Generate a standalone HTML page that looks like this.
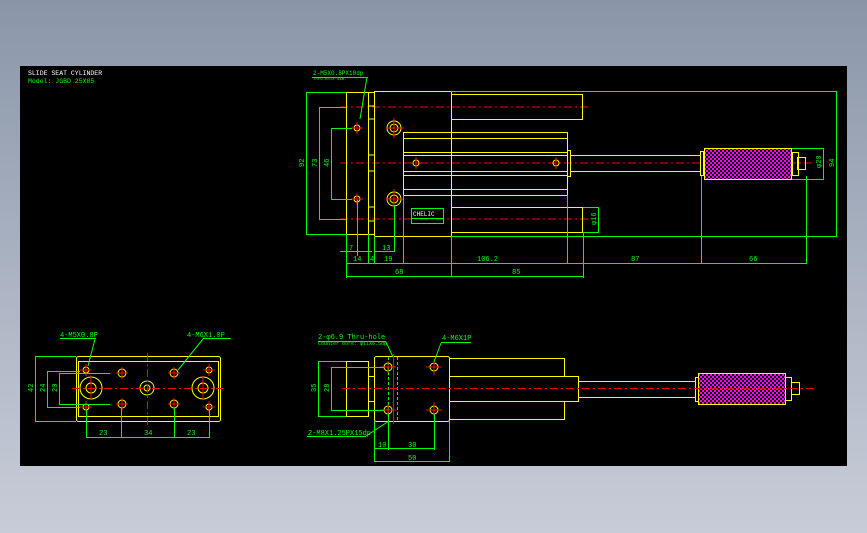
<!DOCTYPE html>
<html><head><meta charset="utf-8"><style>
html,body{margin:0;padding:0;width:867px;height:533px;overflow:hidden;background:linear-gradient(#8a96a8,#b0b8c6 60%,#c8ccd8);}
svg{position:absolute;left:0;top:0}
text{font-family:"Liberation Mono",monospace;font-size:7px;fill:#00ff00}
</style></head><body>
<svg width="867" height="533" viewBox="0 0 867 533">
<defs>
<pattern id="k" width="4" height="4" patternUnits="userSpaceOnUse">
<rect width="4" height="4" fill="#000"/><rect width="2" height="2" fill="#ff00ff"/><rect x="2" y="2" width="2" height="2" fill="#ff00ff"/>
</pattern>
</defs>
<rect x="20" y="66" width="827" height="400" fill="#000"/>
<text x="28" y="75" style="fill:#fff;font-size:6.5px">SLIDE SEAT CYLINDER</text>
<text x="28" y="83" style="font-size:6.5px">Model: JGBD 25X85</text>

<!-- ============ TOP VIEW ============ -->
<g fill="none" stroke="#ff0000" stroke-width="1" stroke-dasharray="8,3,2,3">
<line x1="340" y1="107" x2="590" y2="107"/>
<line x1="340" y1="163" x2="815" y2="163"/>
<line x1="340" y1="219" x2="590" y2="219"/>
</g>
<g fill="none" stroke="#ffff00" stroke-width="1">
<rect x="346.5" y="92.5" width="22" height="142"/>
<rect x="368.5" y="92.5" width="6" height="142"/>
<line x1="368" y1="106" x2="374" y2="106"/><line x1="368" y1="119" x2="374" y2="119"/>
<line x1="368" y1="155" x2="374" y2="155"/><line x1="368" y1="171" x2="374" y2="171"/>
<line x1="368" y1="207" x2="374" y2="207"/><line x1="368" y1="221" x2="374" y2="221"/>
<rect x="374.5" y="91.5" width="77" height="145"/>
<rect x="451.5" y="94.5" width="131" height="25"/>
<rect x="451.5" y="207.5" width="131" height="25"/>
<rect x="403.5" y="132.5" width="164" height="63"/>
<line x1="403" y1="138.5" x2="567" y2="138.5"/>
<line x1="403" y1="152.5" x2="567" y2="152.5"/>
<line x1="403" y1="155.5" x2="567" y2="155.5"/>
<line x1="403" y1="171.5" x2="567" y2="171.5"/>
<line x1="403" y1="175.5" x2="567" y2="175.5"/>
<line x1="403" y1="189.5" x2="567" y2="189.5"/>
<rect x="567.5" y="150.5" width="3" height="26"/>
<rect x="570.5" y="155.5" width="130" height="16"/>
<rect x="700.5" y="151.5" width="3" height="24"/>
<rect x="704.5" y="148.5" width="87" height="31" fill="url(#k)"/>
<rect x="792.5" y="152.5" width="6" height="23"/>
<rect x="797.5" y="157.5" width="8" height="12"/>
<circle cx="394" cy="128" r="7"/><circle cx="394" cy="128" r="4"/>
<circle cx="394" cy="199" r="7"/><circle cx="394" cy="199" r="4"/>
<circle cx="416" cy="163" r="3"/><circle cx="556" cy="163" r="3"/>
<circle cx="357" cy="128" r="3"/><circle cx="357" cy="199" r="3"/>
</g>
<g stroke="#ff0000" stroke-width="1">
<line x1="386" y1="128" x2="404" y2="128"/><line x1="394" y1="118" x2="394" y2="138"/>
<line x1="386" y1="199" x2="404" y2="199"/><line x1="394" y1="189" x2="394" y2="209"/>
<line x1="351" y1="128" x2="363" y2="128"/><line x1="357" y1="122" x2="357" y2="134"/>
<line x1="351" y1="199" x2="363" y2="199"/><line x1="357" y1="193" x2="357" y2="205"/>
<line x1="416" y1="157" x2="416" y2="169"/><line x1="556" y1="157" x2="556" y2="169"/>
</g>
<g fill="none" stroke="#00ff00" stroke-width="1">
<!-- left dims -->
<path d="M306.5 92.5V234.5M306 92.5H346M306 234.5H346"/>
<path d="M319.5 107.5V219.5M319 107.5H346M319 219.5H346"/>
<path d="M331.5 128.5V199.5M331 128.5H352M331 199.5H352"/>
<!-- right dims -->
<path d="M451 91.5H837M451 236.5H837M836.5 91V237"/>
<path d="M792 148.5H823.5V179.5H792"/>
<path d="M583 207.5H598.5V232.5H583"/>
<!-- bottom extension -->
<path d="M346.5 234V278M357.5 200V256M368.5 234V264M374.5 236V264M394.5 205V252M403.5 195V264M451.5 236V276M567.5 195V264M583.5 233V278M701.5 176V264M806.5 176V264"/>
<path d="M340 251.5H372M374 251.5H395"/>
<path d="M346 263.5H807"/>
<path d="M346 276.5H584"/>
<!-- leader -->
<path d="M312 77.5H368M367 77L360 119"/>
<rect x="411.5" y="208.5" width="32" height="10"/>
<rect x="411.5" y="218.5" width="32" height="5"/>
</g>
<text x="313" y="75" style="font-size:6px">2-M5X0.8PX10dp</text>
<text x="313" y="80" style="font-size:4px">Thru-hole dia.</text>
<text x="413" y="216" style="fill:#fff;font-size:6px">CHELIC</text>
<g style="font-size:7px">
<text transform="translate(304,167) rotate(-90)">92</text>
<text transform="translate(317,167) rotate(-90)">73</text>
<text transform="translate(329,167) rotate(-90)">46</text>
<text transform="translate(834,167) rotate(-90)">94</text>
<text transform="translate(821,168) rotate(-90)">φ20</text>
<text transform="translate(596,225) rotate(-90)">φ16</text>
<text x="349" y="250">7</text>
<text x="382" y="250">13</text>
<text x="353" y="261">14</text>
<text x="370" y="261">4</text>
<text x="384" y="261">19</text>
<text x="477" y="261">106.2</text>
<text x="631" y="261">87</text>
<text x="749" y="261">66</text>
<text x="395" y="274">68</text>
<text x="512" y="274">85</text>
</g>

<!-- ============ FRONT-LEFT VIEW ============ -->
<g fill="none" stroke="#ffff00" stroke-width="1">
<rect x="76.5" y="356.5" width="144" height="65" rx="2"/>
<rect x="78.5" y="361.5" width="140" height="55"/>
<circle cx="91" cy="388" r="11"/><circle cx="91" cy="388" r="5"/>
<circle cx="203" cy="388" r="11"/><circle cx="203" cy="388" r="5"/>
<circle cx="147" cy="388" r="7"/><circle cx="147" cy="388" r="3"/>
<circle cx="122" cy="373" r="4"/><circle cx="122" cy="404" r="4"/>
<circle cx="174" cy="373" r="4"/><circle cx="174" cy="404" r="4"/>
<circle cx="86" cy="370" r="3"/><circle cx="86" cy="407" r="3"/>
<circle cx="209" cy="370" r="3"/><circle cx="209" cy="407" r="3"/>
</g>
<g stroke="#ff0000" stroke-width="1">
<line x1="72" y1="388.5" x2="225" y2="388.5" stroke-dasharray="8,3,2,3"/>
<line x1="147.5" y1="353" x2="147.5" y2="425" stroke-dasharray="8,3,2,3"/>
<path d="M80 370H92M86 364V376M80 407H92M86 401V413M203 370H215M209 364V376M203 407H215M209 401V413M116 373H128M122 367V379M116 404H128M122 398V410M168 373H180M174 367V379M168 404H180M174 398V410M91 376V400M203 376V400"/>
</g>
<g fill="none" stroke="#00ff00" stroke-width="1">
<path d="M35.5 356V421M35 356.5H76M35 421.5H76"/>
<path d="M47.5 371V407M47 371.5H80M47 407.5H80"/>
<path d="M59.5 373V404M59 373.5H110M59 404.5H110"/>
<path d="M86.5 410V438M121.5 408V438M174.5 408V438M209.5 410V438M86 437.5H210"/>
<path d="M60 338.5H96M95 339L88 366M203 338.5H231M203 339L178 370"/>
</g>
<g style="font-size:7px">
<text x="60" y="337">4-M5X0.8P</text>
<text x="187" y="337">4-M6X1.0P</text>
<text transform="translate(33,392) rotate(-90)">42</text>
<text transform="translate(45,392) rotate(-90)">24</text>
<text transform="translate(57,392) rotate(-90)">20</text>
<text x="99" y="435">23</text>
<text x="144" y="435">34</text>
<text x="187" y="435">23</text>
</g>

<!-- ============ SIDE VIEW BOTTOM ============ -->
<g fill="none" stroke="#ffff00" stroke-width="1">
<rect x="346.5" y="361.5" width="22" height="55"/>
<path d="M368 376.5H374M368 401.5H374"/>
<rect x="374.5" y="356.5" width="75" height="65" rx="2"/>
<path d="M449.5 358.5H564.5V376M564.5 401V419.5H449.5"/>
<rect x="449.5" y="376.5" width="129" height="25"/>
<rect x="578.5" y="381.5" width="117" height="16"/>
<rect x="695.5" y="377.5" width="3" height="24"/>
<rect x="698.5" y="373.5" width="87" height="31" fill="url(#k)"/>
<rect x="785.5" y="377.5" width="6" height="23"/>
<rect x="791.5" y="382.5" width="8" height="12"/>
<circle cx="388" cy="367" r="4"/><circle cx="388" cy="410" r="4"/>
<circle cx="434" cy="367" r="4"/><circle cx="434" cy="410" r="4"/>
</g>
<g stroke="#00ff00" stroke-width="1" fill="none" stroke-dasharray="3,2">
<path d="M397.5 357V421M388.5 357V421"/>
</g>
<g stroke="#ff0000" stroke-width="1">
<line x1="342" y1="388.5" x2="815" y2="388.5" stroke-dasharray="8,3,2,3"/>
<path d="M393.5 354V424M380 367H396M388 361V373M380 410H396M388 404V416M426 367H442M434 359V375M426 410H442M434 402V418"/>
</g>
<g fill="none" stroke="#00ff00" stroke-width="1">
<path d="M318.5 361V416M318 361.5H346M318 416.5H346"/>
<path d="M331.5 367V410M331 367.5H384M331 410.5H384"/>
<path d="M374.5 421V462M388.5 414V450M434.5 414V450M449.5 421V462M374 448.5H435M374 461.5H450"/>
<path d="M318 341.5H386M386 342L393 357M441 342.5H471M441 343L434 362M307 436.5H366M366 436L389 421"/>
</g>
<g style="font-size:6px">
<text x="318" y="339">2-φ6.9 Thru-hole</text>
<text x="318" y="345" style="font-size:5px">Counter bore: φ11X6.5dp</text>
<text x="442" y="340">4-M6X1P</text>
<text x="308" y="435">2-M8X1.25PX15dp</text>
</g>
<g style="font-size:7px">
<text transform="translate(316,392) rotate(-90)">35</text>
<text transform="translate(329,392) rotate(-90)">28</text>
<text x="378" y="447">10</text>
<text x="408" y="447">30</text>
<text x="408" y="460">50</text>
</g>
</svg>
</body></html>
